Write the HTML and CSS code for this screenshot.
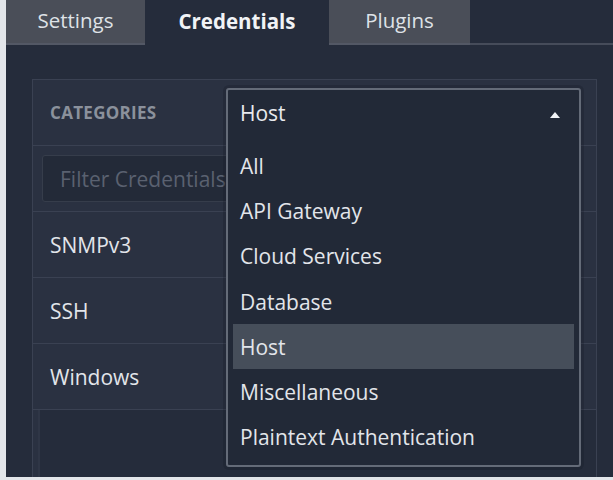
FILE: index.html
```html
<!DOCTYPE html>
<html>
<head>
<meta charset="utf-8">
<link rel="stylesheet" href="styles.css">
</head>
<body>
<div class="app">
  <div class="tabs">
    <div class="tab">Settings</div>
    <div class="tab active">Credentials</div>
    <div class="tab">Plugins</div>
    <div class="tab-fill"></div>
  </div>
  <div class="content">
    <div class="panel">
      <div class="panel-head">CATEGORIES</div>
      <div class="filter-row">
        <div class="filter">Filter Credentials</div>
      </div>
      <div class="row">SNMPv3</div>
      <div class="row">SSH</div>
      <div class="row">Windows</div>
      <div class="panel-rest"></div>

      <div class="dropdown">
        <div class="dd-head">
          <span>Host</span>
          <svg class="caret" width="10" height="6" viewBox="0 0 10 6"><path d="M0 6 L5 0 L10 6 Z" fill="#f2f4f7"/></svg>
        </div>
        <div class="dd-list">
          <div class="opt">All</div>
          <div class="opt">API Gateway</div>
          <div class="opt">Cloud Services</div>
          <div class="opt">Database</div>
          <div class="opt selected">Host</div>
          <div class="opt">Miscellaneous</div>
          <div class="opt">Plaintext Authentication</div>
        </div>
      </div>
    </div>
  </div>
</div>
</body>
</html>
```

FILE: styles.css
```css
* { box-sizing: border-box; }
html, body { margin: 0; padding: 0; }
body {
  background: #e3e6ea;
  width: 613px;
  height: 480px;
  overflow: hidden;
  font-family: "Open Sans", "DejaVu Sans", sans-serif;
}
.app {
  margin-left: 6px;
  width: 607px;
  height: 477px;
  background: #252c3b;
  overflow: hidden;
  display: flex;
  flex-direction: column;
}
.tabs {
  display: flex;
  height: 45px;
  flex: none;
}
.tab {
  height: 45px;
  padding: 0 0 3px;
  display: flex;
  align-items: center;
  justify-content: center;
  background: #4a4e58;
  color: #dfe2e7;
  font-size: 20.5px;
  border-bottom: 2px solid #535865;
}
.tab:first-child { width: 139px; }
.tab:nth-child(3) { width: 141px; }
.tab.active {
  width: 184px;
  background: #252c3b;
  color: #f1f3f6;
  font-weight: 700;
  border-bottom: none;
}
.tab-fill {
  flex: 1;
  border-bottom: 2px solid #464c5a;
  background: #252c3b;
}
.content {
  flex: 1;
  padding: 34px 16px 0 26px;
  display: flex;
  min-height: 0;
}
.panel {
  position: relative;
  flex: 1;
  background: #2a3141;
  border: 1px solid #3a4152;
  border-bottom: none;
  display: flex;
  flex-direction: column;
}
.panel-head {
  height: 66px;
  padding-left: 17px;
  display: flex;
  align-items: center;
  font-size: 17px;
  font-weight: 700;
  letter-spacing: 0.3px;
  color: #8b919c;
  border-bottom: 1px solid #3a4152;
}
.filter-row {
  height: 66px;
  padding: 9px 9px;
  border-bottom: 1px solid #3a4152;
}
.filter {
  width: 260px;
  height: 47px;
  background: #232a38;
  border: 1px solid #363d4b;
  border-radius: 3px;
  padding-left: 17px;
  display: flex;
  align-items: center;
  font-size: 21px;
  color: #5a6170;
  white-space: nowrap;
  overflow: hidden;
}
.row {
  height: 66px;
  padding-left: 17px;
  display: flex;
  align-items: center;
  font-size: 21px;
  color: #e2e5ea;
  border-bottom: 1px solid #3a4152;
}
.panel-rest {
  flex: 1;
  margin-left: 5px;
  border-left: 2px solid #2f3646;
  background: #252c3b;
}
.dropdown {
  position: absolute;
  left: 193px;
  top: 8px;
  width: 355px;
  height: 379px;
  background: #222937;
  border: 2px solid #646b78;
  border-radius: 3px;
  display: flex;
  flex-direction: column;
  box-shadow: 0 0 0 3px rgba(20,25,35,0.25);
}
.dd-head {
  height: 46px;
  padding: 0 19px 0 12px;
  display: flex;
  align-items: center;
  justify-content: space-between;
  font-size: 21px;
  color: #e8eaee;
}
.caret { margin-top: 4px; }
.dd-list {
  padding: 7px 5px 0 5px;
}
.opt {
  height: 45.3px;
  padding-left: 7px;
  display: flex;
  align-items: center;
  font-size: 21px;
  color: #e2e5ea;
}
.opt.selected {
  background: #464e5a;
}
```
